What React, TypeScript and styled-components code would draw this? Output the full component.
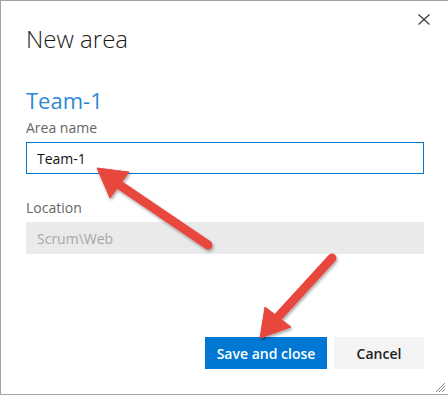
import React from 'react';
import styled, { createGlobalStyle } from 'styled-components';

const GlobalStyle = createGlobalStyle`
  html, body {
    margin: 0;
    padding: 0;
    background: #ffffff;
  }
  body {
    font-family: 'Open Sans', 'Noto Sans', sans-serif;
  }
`;

const Dialog = styled.div`
  position: relative;
  box-sizing: border-box;
  width: 448px;
  height: 395px;
  border-top: 1px solid #a3a3a3;
  border-left: 1px solid #a3a3a3;
  border-bottom: 1px solid #a3a3a3;
  background: #ffffff;
  display: flex;
  flex-direction: column;
  padding: 0 24px 25px 25px;
`;

const Header = styled.div`
  display: flex;
  justify-content: space-between;
  align-items: flex-start;
`;

const Title = styled.h1`
  margin: 22px 0 0;
  font-size: 24px;
  line-height: 32px;
  font-weight: 300;
  color: #1a1a1a;
`;

const CloseButton = styled.button`
  margin: 8px -10px 0 0;
  width: 20px;
  height: 20px;
  padding: 0;
  border: none;
  background: transparent;
  display: flex;
  align-items: center;
  justify-content: center;
  color: #333333;
`;

const AreaTitle = styled.h2`
  margin: 31px 0 0;
  font-size: 22px;
  line-height: 28px;
  font-weight: 400;
  color: #2b88d8;
`;

const Field = styled.div<{ $gap?: number }>`
  display: flex;
  flex-direction: column;
  margin-top: ${({ $gap }) => $gap ?? 0}px;
`;

const Label = styled.label`
  font-size: 14px;
  line-height: 20px;
  color: #666666;
  margin-bottom: 4px;
`;

const TextInput = styled.input<{ $disabled?: boolean }>`
  box-sizing: border-box;
  height: 32px;
  width: 100%;
  margin: 0;
  padding: 0 10px;
  font-family: inherit;
  font-size: 14px;
  color: ${({ $disabled }) => ($disabled ? '#a6a6a6' : '#111111')};
  background: ${({ $disabled }) => ($disabled ? '#eaeaea' : '#ffffff')};
  border: 1px solid ${({ $disabled }) => ($disabled ? '#eaeaea' : '#0078d4')};
  outline: none;
`;

const Footer = styled.div`
  margin-top: auto;
  display: flex;
  justify-content: flex-end;
  gap: 7px;
`;

const Button = styled.button<{ $primary?: boolean }>`
  height: 32px;
  padding: 0;
  width: ${({ $primary }) => ($primary ? 122 : 90)}px;
  border: none;
  font-family: inherit;
  font-size: 14px;
  font-weight: 600;
  color: ${({ $primary }) => ($primary ? '#ffffff' : '#212121')};
  background: ${({ $primary }) => ($primary ? '#0078d4' : '#f4f4f4')};
`;

const Grip = styled.svg`
  position: absolute;
  right: 2px;
  bottom: 1px;
`;

const Overlay = styled.svg`
  position: absolute;
  left: -1px;
  top: -1px;
  pointer-events: none;
`;

const ARROW = '#e8473e';

const Arrow = ({ tip, w1, w2, tail }: { tip: number[]; w1: number[]; w2: number[]; tail: number[] }) => {
  const bx = (w1[0] + w2[0]) / 2;
  const by = (w1[1] + w2[1]) / 2;
  return (
    <g filter="url(#shadow)">
      <line x1={bx} y1={by} x2={tail[0]} y2={tail[1]} stroke={ARROW} strokeWidth={9} strokeLinecap="round" />
      <polygon points={`${tip.join(',')} ${w1.join(',')} ${w2.join(',')}`} fill={ARROW} strokeLinejoin="round" stroke={ARROW} strokeWidth={1} />
    </g>
  );
};

export default function App() {
  return (
    <>
      <GlobalStyle />
      <Dialog>
        <Header>
          <Title>New area</Title>
          <CloseButton aria-label="Close">
            <svg width="12" height="11" viewBox="0 0 12 11">
              <path d="M0.5 0.5 L11.5 10.5 M11.5 0.5 L0.5 10.5" stroke="#333" strokeWidth="1.1" fill="none" />
            </svg>
          </CloseButton>
        </Header>
        <AreaTitle>Team-1</AreaTitle>
        <Field $gap={4}>
          <Label>Area name</Label>
          <TextInput defaultValue="Team-1" />
        </Field>
        <Field $gap={24}>
          <Label>Location</Label>
          <TextInput $disabled readOnly value="Scrum\Web" />
        </Field>
        <Footer>
          <Button $primary>Save and close</Button>
          <Button>Cancel</Button>
        </Footer>
        <Grip width="12" height="12" viewBox="0 0 12 12">
          <path d="M11 2 L2 11 M11 5 L5 11 M11 8 L8 11" stroke="#8a8a8a" strokeWidth="1" />
        </Grip>
        <Overlay width="448" height="396" viewBox="0 0 448 396">
          <defs>
            <filter id="shadow" x="-20%" y="-20%" width="140%" height="140%">
              <feDropShadow dx="1" dy="2" stdDeviation="1.5" floodColor="#000" floodOpacity="0.35" />
            </filter>
          </defs>
          <Arrow tip={[97, 168]} w1={[129, 172]} w2={[110, 198]} tail={[208, 245]} />
          <Arrow tip={[260, 338]} w1={[265, 307]} w2={[291, 327]} tail={[332, 258]} />
        </Overlay>
      </Dialog>
    </>
  );
}
